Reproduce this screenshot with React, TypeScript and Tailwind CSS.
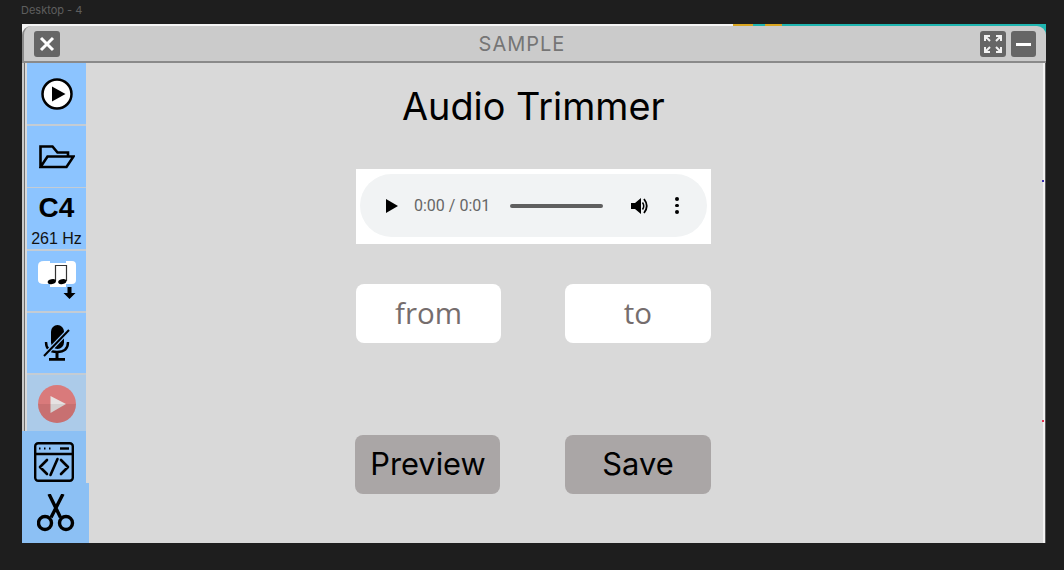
import type { ReactNode } from 'react';

function SideItem({ children, className }: { children: ReactNode; className: string }) {
  return <div className={`flex shrink-0 items-center justify-center ${className}`}>{children}</div>;
}

function WinButton({ children, className }: { children: ReactNode; className: string }) {
  return (
    <div className={`flex h-[26px] items-center justify-center rounded-[3px] bg-[#666666] ${className}`}>{children}</div>
  );
}

export default function App() {
  return (
    <div className="flex h-[570px] w-[1064px] flex-col overflow-hidden bg-[#1e1e1e] font-['Inter',sans-serif]">
      <div className="h-[24px] pl-[21px] pt-[3px] text-[11px] leading-[14px] text-[#5e5e5e]">Desktop - 4</div>

      <div className="relative ml-[22px] flex h-[519px] w-[1024px] flex-col bg-[linear-gradient(to_right,#f4f4f4_0,#f4f4f4_711px,#d9a520_711px,#d9a520_731px,#1fb5b0_731px,#1fb5b0_743px,#d9a520_743px,#d9a520_760px,#1fb5b0_760px,#1fb5b0_100%)] pt-[2px]">
        <div className="flex h-[37px] shrink-0 items-center justify-between rounded-t-[9px] border-b-2 border-l-2 border-[#8a8a8a] bg-[#cbcbcb] pl-[10px] pr-[10px] pt-[1px]">
          <WinButton className="w-[26px]">
            <svg width="18" height="18" viewBox="0 0 18 18" fill="none" stroke="#fff" strokeWidth="3">
              <path d="M3 3l12 12M15 3L3 15" />
            </svg>
          </WinButton>
          <div className="ml-[4px] text-[20px] tracking-[1px] text-[#757575]">SAMPLE</div>
          <div className="flex gap-[5px]">
            <WinButton className="w-[26px]">
              <svg width="20" height="20" viewBox="0 0 20 20" fill="none" stroke="#f2f2f2" strokeWidth="2">
                <path d="M2 7V2h5M2 2l5 5M18 7V2h-5M18 2l-5 5M2 13v5h5M2 18l5-5M18 13v5h-5M18 18l-5-5" />
              </svg>
            </WinButton>
            <WinButton className="w-[25px]">
              <div className="h-[3px] w-[15px] bg-white" />
            </WinButton>
          </div>
        </div>

        <div className="flex min-h-0 flex-1 border-r border-[#5a5a5a] bg-[#f0f0f0]">
          <div className="w-[2px] bg-[#c9c9c9]" />
          <div className="w-[1px] bg-[#6f6f6f]" />
          <div className="relative flex flex-1 bg-[#d9d9d9]">
            <div className="flex w-[62px] flex-col">
              <SideItem className="ml-[2px] h-[63px] w-[59px] border-b-2 border-[#c4ccd4] bg-[#8cc4ff]">
                <svg width="32" height="32" viewBox="0 0 32 32">
                  <circle cx="16" cy="16" r="14.5" fill="#fff" stroke="#000" strokeWidth="2.5" />
                  <path d="M11 8.5L24.5 16 11 23.5z" fill="#000" />
                </svg>
              </SideItem>
              <SideItem className="ml-[2px] h-[62px] w-[59px] border-b border-[#c4ccd4] bg-[#8cc4ff]">
                <svg width="36" height="24" viewBox="0 0 36 24" fill="none" stroke="#000" strokeWidth="2.600">
                  <path d="M1.5 22V1.5h12l5 6h10.5v4.500M1.5 22h26l7-10.500H8.500z" />
                </svg>
              </SideItem>
              <SideItem className="ml-[2px] h-[63px] w-[59px] flex-col border-b-2 border-[#c4ccd4] bg-[#8cc4ff] pt-[4px] font-['Liberation_Sans',sans-serif] text-black">
                <div className="text-[28px] font-bold leading-[30px]">C4</div>
                <div className="mt-[7px] text-[16px] leading-[18px] text-[#111]">261 Hz</div>
              </SideItem>
              <SideItem className="ml-[2px] h-[62px] w-[59px] border-b-2 border-[#c4ccd4] bg-[#8cc4ff]">
                <svg width="40" height="40" viewBox="0 0 40 40">
                  <path d="M7 0h6v2h16V0h6q4 0 4 4v15q0 4-4 4h-6v3H13v-3H7q-6 0-6-4V5q0-5 6-5z" fill="#fff" />
                  <path d="M18.500 20V4.500h11V20" fill="none" stroke="#333" strokeWidth="1.200" />
                  <ellipse cx="14.800" cy="20.700" rx="4.200" ry="2.400" fill="#000" transform="rotate(-12 14.800 20.700)" />
                  <ellipse cx="25.300" cy="20.700" rx="4.200" ry="2.400" fill="#000" transform="rotate(-12 25.300 20.700)" />
                  <path d="M30.500 26h4v6h4l-6 6-6-6h4z" fill="#000" />
                </svg>
              </SideItem>
              <SideItem className="ml-[2px] h-[62px] w-[59px] border-b-2 border-[#c4ccd4] bg-[#8cc4ff]">
                <svg width="28" height="38" viewBox="0 0 28 38">
                  <rect x="8" y="1" width="13" height="24" rx="6.500" fill="#000" />
                  <path d="M3 18q0 10 11 10t11-10" fill="none" stroke="#000" strokeWidth="2.400" />
                  <path d="M12.500 28h3v6h-3zM6 34h16v2.800H6z" fill="#000" />
                  <path d="M1 32L26 6" stroke="#8cc4ff" strokeWidth="4.500" />
                  <path d="M1 32L26 6" stroke="#000" strokeWidth="2" />
                </svg>
              </SideItem>
              <SideItem className="ml-[2px] h-[56px] w-[59px] bg-[#accbe9]">
                <svg width="38" height="38" viewBox="0 0 38 38" className="mt-[1px]">
                  <circle cx="19" cy="19" r="19" fill="#d97a7b" />
                  <path d="M12.500 11L28 19 12.500 28z" fill="#e6e2e2" />
                  <path d="M0 19h38a19 19 0 0 1-38 0z" fill="#000" opacity="0.08" />
                </svg>
              </SideItem>
              <SideItem className="ml-[-3px] h-[52px] w-[64px] bg-[#8cc0f4]">
                <svg width="40" height="40" viewBox="0 0 40 40" fill="none" stroke="#000" strokeWidth="2.400" className="mt-[9px]">
                  <rect x="1.200" y="1.200" width="37.600" height="37.600" rx="3" />
                  <path d="M1 12h38" />
                  <path d="M26 6.500h9" strokeWidth="2.400" />
                  <path d="M5 6.500h1.500M10 6.500h1.500M15 6.500h1.500" strokeWidth="2.200" />
                  <path d="M13 18l-7 7 7 7M27 18l7 7-7 7M23.500 17l-7 16" strokeWidth="2.600" strokeLinecap="round" strokeLinejoin="round" />
                </svg>
              </SideItem>
              <SideItem className="ml-[-3px] h-[60px] w-[67px] bg-[#8cc0f4]">
                <svg width="38" height="38" viewBox="0 0 38 38" fill="none" stroke="#000" strokeWidth="3.400" className="mt-[-1px]">
                  <circle cx="8" cy="29" r="6.500" />
                  <circle cx="29" cy="29" r="6.500" />
                  <path d="M12 0l11.500 23.500M26 0L14 23.500" />
                </svg>
              </SideItem>
            </div>

            <div className="relative flex flex-1 flex-col items-start pl-[269px]">
              <h1 className="mt-[20px] ml-[46px] text-[37.800px] leading-[46px] text-black">Audio Trimmer</h1>

              <div className="mt-[40px] flex h-[75px] w-[355px] items-center justify-center bg-white">
                <div className="mb-[2px] flex h-[63px] w-[347px] items-center rounded-[32px] bg-[#f1f3f4] pl-[26px] font-['Roboto',sans-serif]">
                  <svg width="12" height="14" viewBox="0 0 12 14"><path d="M0 0l12 7-12 7z" fill="#000" /></svg>
                  <span className="ml-[16px] w-[78px] whitespace-nowrap text-[16px] leading-[18px] text-[#666]">0:00 / 0:01</span>
                  <div className="ml-[18px] h-[4px] w-[93px] rounded-full bg-[#5f5f5f]" />
                  <svg width="18" height="18" viewBox="0 0 18 18" className="ml-[28px]">
                    <path d="M0 6h4l6-5v16l-6-5H0z" fill="#000" />
                    <path d="M11.500 5.500q2.500 3.500 0 7" fill="none" stroke="#000" strokeWidth="1.500" />
                    <path d="M13 2q5.500 7 0 14" fill="none" stroke="#000" strokeWidth="1.800" />
                  </svg>
                  <div className="ml-[26px] flex flex-col gap-[3px]">
                    <div className="h-[3.500px] w-[3.500px] rounded-full bg-black" />
                    <div className="h-[3.500px] w-[3.500px] rounded-full bg-black" />
                    <div className="h-[3.500px] w-[3.500px] rounded-full bg-black" />
                  </div>
                </div>
              </div>

              <div className="mt-[40px] flex w-[355px] justify-between font-['Open_Sans',sans-serif] text-[29.500px] text-[#756d6d]">
                <div className="flex h-[59px] w-[145px] items-center justify-center rounded-[8px] bg-white pb-[1px]">from</div>
                <div className="flex h-[59px] w-[146px] items-center justify-center rounded-[8px] bg-white pb-[1px]">to</div>
              </div>

              <div className="mt-[92px] ml-[-1px] flex w-[356px] justify-between text-[30.800px] text-black">
                <div className="flex h-[59px] w-[145px] items-center justify-center rounded-[8px] bg-[#aaa6a6] pl-[1px]">Preview</div>
                <div className="flex h-[59px] w-[146px] items-center justify-center rounded-[8px] bg-[#aaa6a6]">Save</div>
              </div>
            </div>
            <div className="w-[2px] bg-[#f2f2f2]" />
          </div>
        </div>

        <div className="absolute right-[2px] top-[156px] h-[2px] w-[2px] bg-[#3a2fb0]" />
        <div className="absolute right-[2px] top-[396px] h-[2px] w-[2px] bg-[#e8304f]" />
      </div>
    </div>
  );
}
